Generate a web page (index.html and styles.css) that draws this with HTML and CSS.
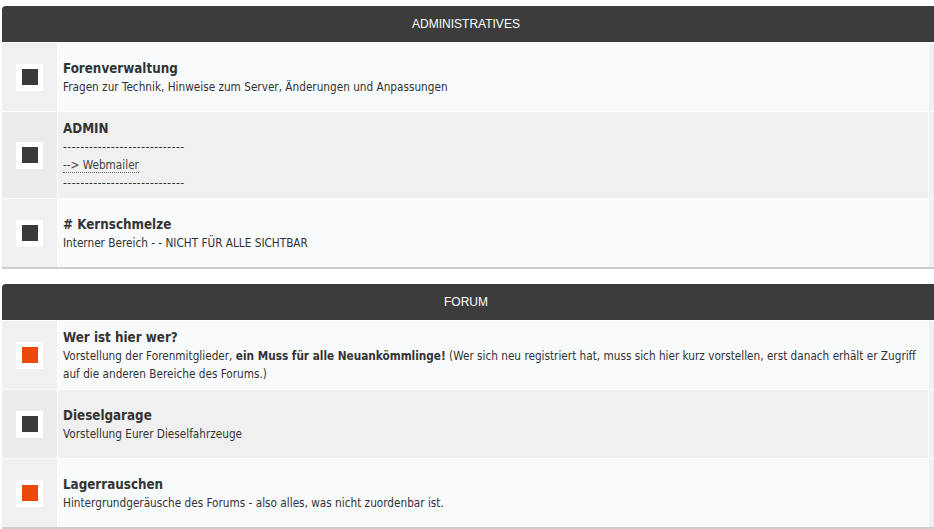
FILE: index.html
```html
<!DOCTYPE html>
<html lang="de">
<head>
    <meta charset="UTF-8">
    <meta name="viewport" content="width=device-width, initial-scale=1.0">
    <title>Forum</title>
    <link rel="stylesheet" href="styles.css">
</head>
<body>

<div class="forum">

    <!-- Administratives -->
    <div class="category">
        <div class="cat-head">ADMINISTRATIVES</div>

        <div class="row odd">
            <div class="icon-cell"><span class="icon"><span class="dot"></span></span></div>
            <div class="info">
                <div class="title">Forenverwaltung</div>
                <div class="desc">Fragen zur Technik, Hinweise zum Server, Änderungen und Anpassungen</div>
            </div>
            <div class="stats"></div>
        </div>

        <div class="row even">
            <div class="icon-cell"><span class="icon"><span class="dot"></span></span></div>
            <div class="info">
                <div class="title">ADMIN</div>
                <div class="desc dashes">----------------------------</div>
                <div class="desc"><a href="#" class="link">--&gt; Webmailer</a></div>
                <div class="desc dashes">----------------------------</div>
            </div>
            <div class="stats"></div>
        </div>

        <div class="row odd">
            <div class="icon-cell"><span class="icon"><span class="dot"></span></span></div>
            <div class="info">
                <div class="title"># Kernschmelze</div>
                <div class="desc">Interner Bereich - - NICHT FÜR ALLE SICHTBAR</div>
            </div>
            <div class="stats"></div>
        </div>
    </div>

    <!-- Forum -->
    <div class="category">
        <div class="cat-head">FORUM</div>

        <div class="row odd">
            <div class="icon-cell"><span class="icon"><span class="dot new"></span></span></div>
            <div class="info">
                <div class="title">Wer ist hier wer?</div>
                <div class="desc">Vorstellung der Forenmitglieder, <strong>ein Muss für alle Neuankömmlinge!</strong> (Wer sich neu registriert hat, muss sich hier kurz vorstellen, erst danach erhält er Zugriff auf die anderen Bereiche des Forums.)</div>
            </div>
            <div class="stats"></div>
        </div>

        <div class="row even">
            <div class="icon-cell"><span class="icon"><span class="dot"></span></span></div>
            <div class="info">
                <div class="title">Dieselgarage</div>
                <div class="desc">Vorstellung Eurer Dieselfahrzeuge</div>
            </div>
            <div class="stats"></div>
        </div>

        <div class="row odd">
            <div class="icon-cell"><span class="icon"><span class="dot new"></span></span></div>
            <div class="info">
                <div class="title">Lagerrauschen</div>
                <div class="desc">Hintergrundgeräusche des Forums - also alles, was nicht zuordenbar ist.</div>
            </div>
            <div class="stats"></div>
        </div>
    </div>

</div>

</body>
</html>
```

FILE: styles.css
```css
body {
    margin: 0;
    background-color: #fff;
    font-family: "DejaVu Sans Condensed", "DejaVu Sans", sans-serif;
    color: #333;
    overflow: hidden;
}
.forum {
    padding: 6px 0 0 2px;
}
.category {
    margin-bottom: 15px;
    border-bottom: 2px solid #cdcdcd;
}
.cat-head {
    height: 36px;
    line-height: 36px;
    background-color: #3c3c3c;
    color: #fff;
    text-align: center;
    font-family: "Liberation Sans", Arial, sans-serif;
    font-size: 12px;
    border-radius: 4px 0 0 0;
    padding-right: 4px;
}
.row {
    display: grid;
    grid-template-columns: 55px 1fr 5px;
    column-gap: 1px;
    background-color: #fff;
    border-top: 1px solid #fff;
}
.icon-cell {
    display: flex;
    align-items: center;
    padding-left: 14px;
}
.info {
    min-height: 54px;
    padding: 8px 6px 6px 5px;
    display: flex;
    flex-direction: column;
    justify-content: center;
}
.odd .icon-cell {
    background-color: #f0f0f0;
}
.odd .info {
    background-color: #f9fafc;
}
.even .icon-cell {
    background-color: #ebebeb;
}
.even .info {
    background-color: #f0f0f0;
}
.stats {
    background-color: #efefef;
}
.icon {
    width: 27px;
    height: 27px;
    background-color: #fff;
    display: flex;
    align-items: center;
    justify-content: center;
}
.dot {
    width: 16px;
    height: 16px;
    background-color: #3a3a3a;
}
.dot.new {
    background-color: #ec4a0a;
}
.title {
    font-weight: bold;
    font-size: 13.3px;
    line-height: 18px;
    color: #333;
}
.desc {
    font-size: 11.7px;
    line-height: 18px;
    color: #333;
}
.dashes {
    letter-spacing: 0.55px;
}
.link {
    color: #444;
    text-decoration: none;
    border-bottom: 1px dotted #666;
}
```
